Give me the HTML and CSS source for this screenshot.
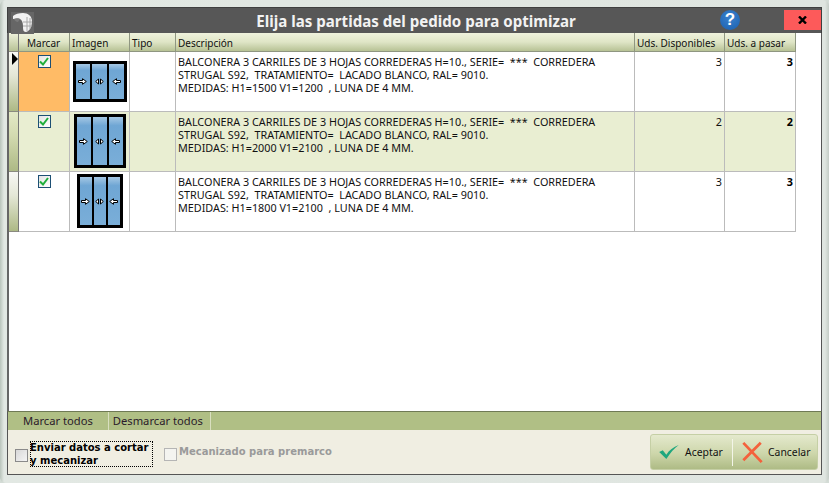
FILE: index.html
```html
<!DOCTYPE html>
<html lang="es">
<head>
<meta charset="utf-8">
<title>Elija las partidas del pedido para optimizar</title>
<link rel="stylesheet" href="styles.css">
</head>
<body>
<svg class="defs" width="0" height="0" aria-hidden="true">
  <defs>
    <symbol id="ar" viewBox="0 0 9 7"><path d="M0.5 2.5H4.5V0.7L8.3 3.5L4.5 6.3V4.5H0.5Z" fill="#fff" stroke="#000" stroke-width="1"/></symbol>
    <symbol id="al" viewBox="0 0 9 7"><path d="M8.5 2.5H4.5V0.7L0.7 3.5L4.5 6.3V4.5H8.5Z" fill="#fff" stroke="#000" stroke-width="1"/></symbol>
    <symbol id="ac" viewBox="0 0 9 7"><path d="M0.7 3.5L3.5 1V6ZM8.3 3.5L5.5 1V6Z" fill="#fff" stroke="#000" stroke-width="1"/></symbol>
  </defs>
</svg>
<div class="window">
  <header class="titlebar">
    <div class="logo">
      <svg width="22" height="20" viewBox="0 0 22 20"><path d="M1 3C3 1 7 0 11 0C16 0 20 3 20 8C20 13 18 18 14 19C11 19 11 16 11 13C11 10 10 7 8 6C6 5 3 6 1 6Z" fill="#f2f2f2"/><path d="M15 4V18M18 5V16M11 9H20M11 13H20" stroke="#a8a8a8" stroke-width="1"/><path d="M2 6C4 5 6 5 8 6L6 9C4 9 3 8 2 6Z" fill="#7a7a7a"/></svg>
    </div>
    <h1 class="title">Elija las partidas del pedido para optimizar</h1>
    <div class="help">?</div>
    <div class="close"><svg width="9" height="8" viewBox="0 0 9 8"><path d="M1 0.5L8 7.5M8 0.5L1 7.5" stroke="#000" stroke-width="2.4"/></svg></div>
  </header>

  <main class="grid-area">
    <div class="grid">
      <div class="rh rh-head"></div>
      <div class="th th-mark">Marcar</div>
      <div class="th">Imagen</div>
      <div class="th">Tipo</div>
      <div class="th">Descripción</div>
      <div class="th">Uds. Disponibles</div>
      <div class="th">Uds. a pasar</div>

      <div class="rh rh-current"><span class="pointer"></span></div>
      <div class="td mark selected"><span class="check"><svg width="10" height="9" viewBox="0 0 10 9"><path d="M1 4.5L4 7.5L9 1" fill="none" stroke="#1fae3c" stroke-width="2"/></svg></span></div>
      <div class="td img">
        <div class="win w1">
          <div class="pane"><svg width="9" height="7"><use href="#ar"/></svg></div>
          <div class="pane"><svg width="9" height="7"><use href="#ac"/></svg></div>
          <div class="pane"><svg width="9" height="7"><use href="#al"/></svg></div>
        </div>
      </div>
      <div class="td"></div>
      <div class="td desc">BALCONERA 3 CARRILES DE 3 HOJAS CORREDERAS H=10., SERIE=&nbsp; *** &nbsp;CORREDERA<br>STRUGAL S92,&nbsp; TRATAMIENTO=&nbsp; LACADO BLANCO, RAL= 9010.<br>MEDIDAS: H1=1500 V1=1200&nbsp; , LUNA DE 4 MM.</div>
      <div class="td num">3</div>
      <div class="td num strong">3</div>

      <div class="rh rh-alt"></div>
      <div class="td mark alt"><span class="check"><svg width="10" height="9" viewBox="0 0 10 9"><path d="M1 4.5L4 7.5L9 1" fill="none" stroke="#1fae3c" stroke-width="2"/></svg></span></div>
      <div class="td img alt">
        <div class="win w2">
          <div class="pane"><svg width="9" height="7"><use href="#ar"/></svg></div>
          <div class="pane"><svg width="9" height="7"><use href="#ac"/></svg></div>
          <div class="pane"><svg width="9" height="7"><use href="#al"/></svg></div>
        </div>
      </div>
      <div class="td alt"></div>
      <div class="td desc alt">BALCONERA 3 CARRILES DE 3 HOJAS CORREDERAS H=10., SERIE=&nbsp; *** &nbsp;CORREDERA<br>STRUGAL S92,&nbsp; TRATAMIENTO=&nbsp; LACADO BLANCO, RAL= 9010.<br>MEDIDAS: H1=2000 V1=2100&nbsp; , LUNA DE 4 MM.</div>
      <div class="td num alt">2</div>
      <div class="td num strong alt">2</div>

      <div class="rh rh-plain"></div>
      <div class="td mark"><span class="check"><svg width="10" height="9" viewBox="0 0 10 9"><path d="M1 4.5L4 7.5L9 1" fill="none" stroke="#1fae3c" stroke-width="2"/></svg></span></div>
      <div class="td img">
        <div class="win w3">
          <div class="pane"><svg width="9" height="7"><use href="#ar"/></svg></div>
          <div class="pane"><svg width="9" height="7"><use href="#ac"/></svg></div>
          <div class="pane"><svg width="9" height="7"><use href="#al"/></svg></div>
        </div>
      </div>
      <div class="td"></div>
      <div class="td desc">BALCONERA 3 CARRILES DE 3 HOJAS CORREDERAS H=10., SERIE=&nbsp; *** &nbsp;CORREDERA<br>STRUGAL S92,&nbsp; TRATAMIENTO=&nbsp; LACADO BLANCO, RAL= 9010.<br>MEDIDAS: H1=1800 V1=2100&nbsp; , LUNA DE 4 MM.</div>
      <div class="td num">3</div>
      <div class="td num strong">3</div>
    </div>
  </main>

  <nav class="tabs">
    <div class="tab tab-first">Marcar todos</div>
    <div class="tab">Desmarcar todos</div>
  </nav>

  <footer class="footer">
    <label class="opt focus"><span class="box"></span><span class="opt-text focused">Enviar datos a cortar<br>y mecanizar</span></label>
    <label class="opt disabled"><span class="box box-off"></span><span class="opt-text">Mecanizado para premarco</span></label>
    <div class="actions">
      <button class="btn btn-ok">
        <svg width="22" height="16" viewBox="0 0 24 18"><path d="M1 9L5 7L9 12C12 7 17 3 23 1C18 5 13 10 9 17Z" fill="#1fa77e"/></svg>
        Aceptar
      </button>
      <span class="sep"></span>
      <button class="btn btn-no">
        <svg width="23" height="22" viewBox="0 0 24 24"><path d="M2 2L22 23M21 2L2 21" fill="none" stroke="#f4613c" stroke-width="3"/></svg>
        Cancelar
      </button>
    </div>
  </footer>
</div>
</body>
</html>
```
FILE: styles.css
```css
* { box-sizing: border-box; }
html, body { margin: 0; padding: 0; }
body {
  width: 829px;
  height: 483px;
  overflow: hidden;
  background: #d4dcd6;
  font-family: "Noto Sans", "DejaVu Sans", sans-serif;
}
.defs { position: absolute; }
.window {
  width: 829px;
  height: 483px;
  padding: 7px 7px 8px 7px;
  display: flex;
  flex-direction: column;
  background: linear-gradient(90deg, #b9c4bb 0, #e2e8e3 4px, #dfe5e0 825px, #c4ccc6 829px);
  border-radius: 6px;
}
.titlebar {
  flex: none;
  height: 26px;
  display: flex;
  align-items: center;
  position: relative;
  background: #575757;
  border: 1px solid #3f3f3f;
  border-bottom: 0;
  padding-left: 3px;
}
.logo {
  width: 23px;
  height: 22px;
  margin-top: 4px;
  background: #666;
  display: flex;
  align-items: center;
  justify-content: center;
}
.title {
  position: absolute;
  left: 0;
  right: 0;
  top: 4px;
  margin: 0;
  text-align: center;
  color: #f2f2f2;
  font: bold 15.1px/19px "Noto Sans", sans-serif;
  padding-left: 3px;
}
.help {
  position: absolute;
  left: 712px;
  top: 2px;
  width: 20px;
  height: 20px;
  border-radius: 50%;
  background: radial-gradient(circle at 50% 35%, #3b82cf, #1a5fae);
  color: #fff;
  font: bold 17px/20px "Liberation Sans", sans-serif;
  text-align: center;
}
.close {
  position: absolute;
  right: 0;
  top: 2px;
  width: 37px;
  height: 20px;
  background: #fd5a5a;
  display: flex;
  align-items: center;
  justify-content: center;
}
.grid-area {
  flex: 1;
  min-height: 0;
  background: #fff;
  border-left: 2px solid #666;
  border-right: 1px solid #555;
}
.grid {
  display: grid;
  grid-template-columns: 10px 51px 60px 46px 459px 90px 71px;
  grid-template-rows: 19px 60px 60px 60px;
  width: 787px;
  font-size: 10.8px;
  color: #111;
}
.th {
  background: linear-gradient(180deg, #eff2dc 0, #dfe5c6 50%, #b7c295 100%);
  border-right: 1px solid #8f9681;
  border-bottom: 1px solid #8f9681;
  padding: 3px 0 0 2px;
  font-size: 10px;
  line-height: 15px;
  white-space: nowrap;
}
.th-mark { padding-left: 8px; }
.rh { border-right: 1px solid #777; border-bottom: 1px solid #8a8a80; }
.rh-head { background: linear-gradient(180deg, #eff2dc, #b7c295); }
.rh-current { background: linear-gradient(180deg, #f8f8f5 0, #e4e7d6 40%, #adb985 100%); position: relative; }
.rh-alt { background: linear-gradient(180deg, #e3e9c6 0, #d3dab0 40%, #adb985 100%); }
.rh-plain { background: linear-gradient(180deg, #f8f8f5 0, #e4e7d6 40%, #adb985 100%); }
.pointer {
  position: absolute;
  left: 3px;
  top: 1px;
  border-left: 6px solid #000;
  border-top: 6px solid transparent;
  border-bottom: 6px solid transparent;
}
.td {
  background: #fff;
  border-right: 1px solid #bbb;
  border-bottom: 1px solid #bbb;
  min-width: 0;
}
.td.alt { background: #e9eed2; }
.td.selected { background: #ffbb66; }
.mark { display: flex; justify-content: center; padding-top: 3px; }
.check {
  width: 13px;
  height: 13px;
  border: 1px solid #1d4f74;
  background: linear-gradient(135deg, #e4e4e4, #fff);
  display: flex;
  align-items: center;
  justify-content: center;
}
.img { display: flex; align-items: center; justify-content: center; padding-bottom: 1px; }
.win {
  display: flex;
  gap: 2px;
  border: 3px solid #000;
  background: #000;
}
.w1 { width: 54px; height: 41px; margin-top: 1px; }
.w2 { width: 52px; height: 54px; }
.w3 { width: 46px; height: 54px; }
.pane {
  flex: 1;
  background: linear-gradient(180deg, #a6c8e4 0, #6fa6d4 18%, #7aaed8 100%);
  display: flex;
  align-items: center;
  justify-content: center;
}
.desc {
  padding: 3px 0 0 2px;
  line-height: 13px;
  white-space: nowrap;
}
.num { text-align: right; padding: 3px 2px 0 0; line-height: 13px; }
.strong { font-weight: bold; color: #000; }
.tabs {
  flex: none;
  height: 19px;
  background: #b0bf85;
  display: flex;
  border-left: 1px solid #555;
  border-right: 1px solid #555;
  border-top: 1px solid #6f7a55;
}
.tab {
  font-size: 11.2px;
  line-height: 17px;
  color: #2a1a2a;
  padding: 0 7px 0 4px;
  border-right: 1px solid #d9dfbf;
}
.tab-first { padding-left: 15px; padding-right: 15px; }
.footer {
  flex: none;
  height: 45px;
  background: #f0eee2;
  border-left: 1px solid #555;
  border-right: 1px solid #555;
  border-bottom: 1px solid #555;
  display: flex;
  align-items: flex-start;
  padding-left: 7px;
  position: relative;
}
.opt {
  display: flex;
  align-items: flex-start;
  font: bold 10px/13px "DejaVu Sans", sans-serif;
  color: #000;
}
.focus { margin-top: 11px; }
.focus .box { margin-top: 8px; }
.disabled { margin-left: 11px; margin-top: 15px; color: #9a9a9a; }
.disabled .box { margin-top: 3px; }
.box {
  flex: none;
  width: 13px;
  height: 13px;
  margin-right: 2px;
  border: 1px solid #8a8a8a;
  background: linear-gradient(135deg, #d8d8d8, #f4f4f4);
}
.box-off { border-color: #b5b5b5; background: #f4f4f0; }
.opt-text { white-space: nowrap; }
.focused { outline: 1px dotted #000; outline-offset: -1px; width: 123px; height: 26px; display: block; }
.actions {
  position: absolute;
  right: 3px;
  top: 4px;
  width: 168px;
  height: 36px;
  border-radius: 3px;
  border: 1px solid #c5cfa5;
  background: linear-gradient(180deg, #e4e9cd 0, #cdd6aa 55%, #aebb85 100%);
  display: flex;
  align-items: center;
}
.btn {
  border: 0;
  background: none;
  padding: 0;
  font: 10.4px "Noto Sans", sans-serif;
  color: #111;
  display: flex;
  align-items: center;
  white-space: nowrap;
}
.btn-ok { width: 81px; padding-left: 7px; gap: 5px; }
.btn-no { padding-left: 8px; gap: 4px; }
.sep { width: 1px; height: 27px; background: #f3f5e8; }
```
